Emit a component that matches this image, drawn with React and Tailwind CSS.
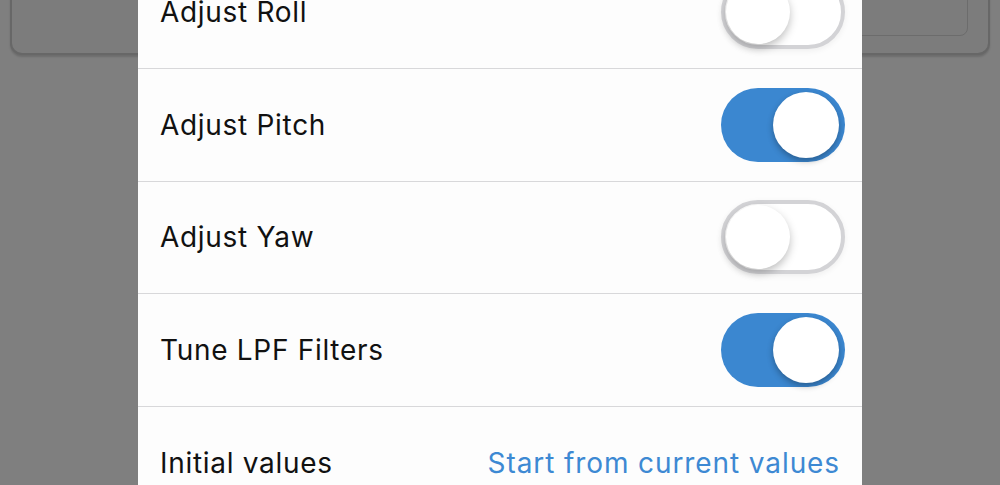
import React from "react";

function Toggle({ on }) {
  if (on) {
    return (
      <div className="relative h-[74px] w-[124px] shrink-0 rounded-full bg-[#3b87d0]">
        <div className="absolute right-[6px] top-[4px] h-[66px] w-[66px] rounded-full bg-white shadow-[0_3px_6px_rgba(0,0,0,0.3)]" />
      </div>
    );
  }
  return (
    <div className="relative h-[74px] w-[124px] shrink-0 rounded-full border-[4px] border-[#d3d3d6] bg-white shadow-[0_2px_6px_rgba(0,0,0,0.06)]">
      <div className="absolute left-[1px] top-[1px] h-[64px] w-[64px] rounded-full bg-white shadow-[0_4px_8px_rgba(0,0,0,0.25)]" />
    </div>
  );
}

function Row({ label, on, last }) {
  return (
    <div className={"flex h-[112.5px] items-center justify-between pl-[22px] pr-[17px] " + (last ? "" : "border-b border-[#d8d8da]")}>
      <span className="text-[28px] text-[#111] tracking-[0.7px]">{label}</span>
      <Toggle on={on} />
    </div>
  );
}

export default function App() {
  return (
    <div className="relative h-[485px] w-[1000px] overflow-hidden bg-[#7f7f7f]" style={{ fontFamily: "Inter, 'Noto Sans', sans-serif" }}>
      <div className="mx-[10px] -mt-[20px] h-[75px] rounded-b-[12px] border-[2px] border-[#676767] bg-[#7c7c7c] pr-[20px] pb-[17px] shadow-[0_2px_2px_rgba(0,0,0,0.15)]">
        <div className="ml-auto h-full w-[500px] rounded-b-[8px] border-[1.5px] border-[#6c6c6c]" />
      </div>
      <div className="absolute left-[138px] top-[-43.5px] w-[724px] bg-[#fdfdfd]">
        <Row label="Adjust Roll" on={false} />
        <Row label="Adjust Pitch" on={true} />
        <Row label="Adjust Yaw" on={false} />
        <Row label="Tune LPF Filters" on={true} />
        <div className="flex h-[113px] items-center justify-between pl-[22px] pr-[22px]">
          <span className="text-[28px] text-[#111] tracking-[0.7px]">Initial values</span>
          <span className="text-[28px] text-[#3d89d3] tracking-[0.9px]">Start from current values</span>
        </div>
      </div>
    </div>
  );
}
